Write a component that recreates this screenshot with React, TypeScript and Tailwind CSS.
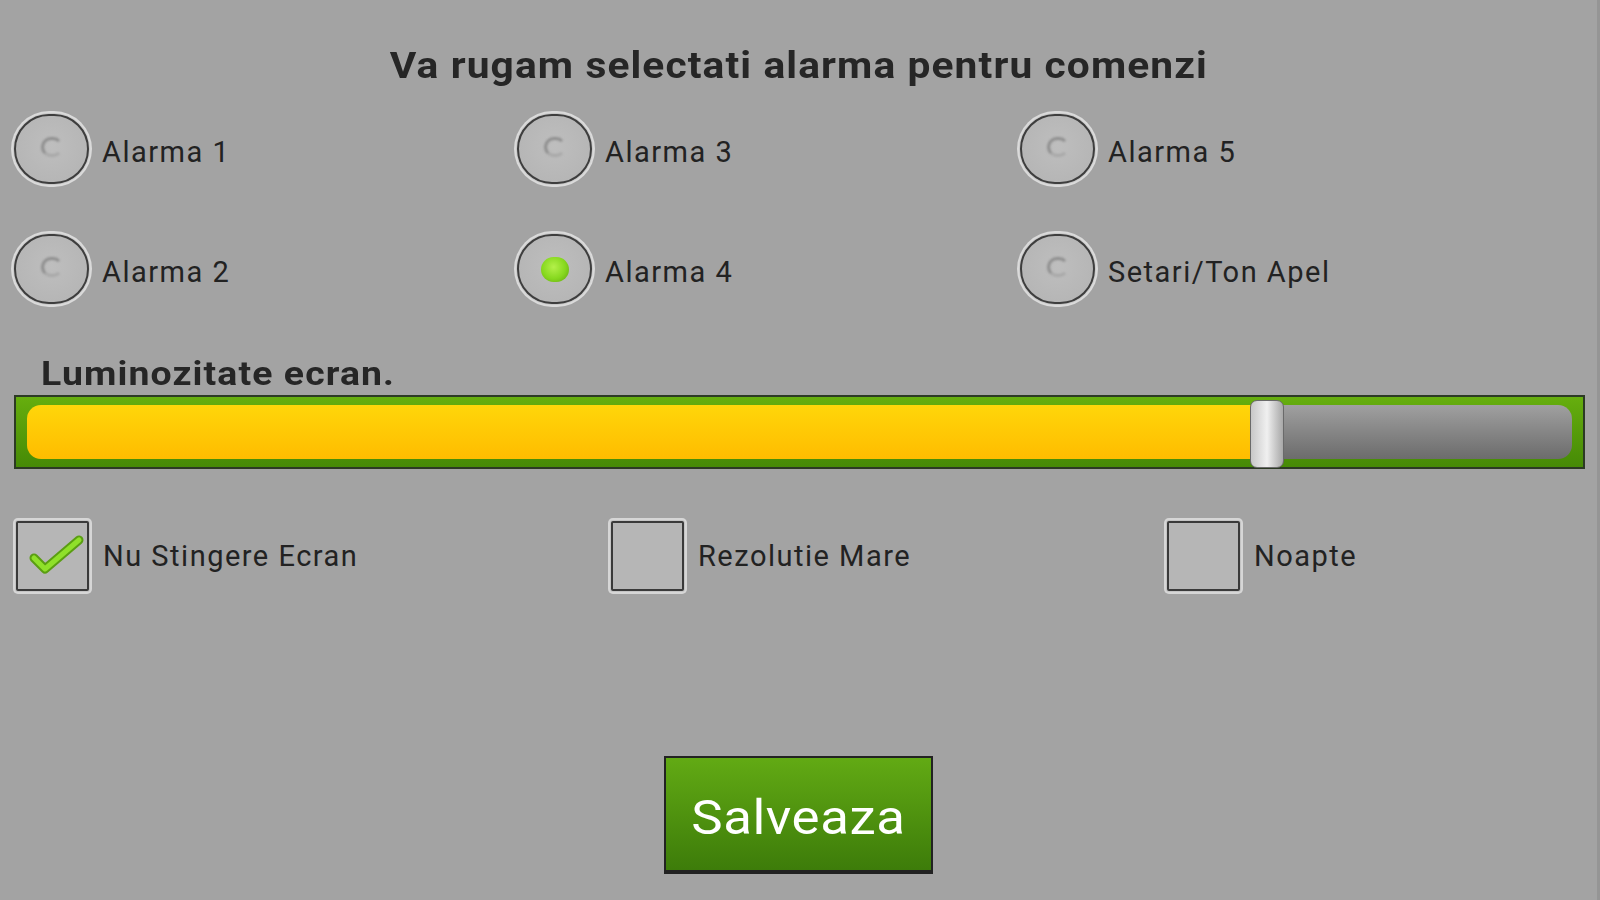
import React from "react";

const font = { fontFamily: "Roboto, 'Liberation Sans', Arial, sans-serif" };

function Radio({ label, checked }: { label: string; checked?: boolean }) {
  return (
    <div className="flex items-center h-[68px]">
      <div className="relative w-[75px] h-[70px] rounded-full border-[2px] border-[#3e3e3e] bg-[radial-gradient(circle_at_50%_45%,#bebebe_0%,#b6b6b6_70%,#aeaeae_100%)] shadow-[0_0_0_1px_#c8c8c8,0_0_0_3px_#dadada] flex items-center justify-center shrink-0">
        {checked ? (
          <div className="w-[28px] h-[25px] rounded-full bg-[radial-gradient(circle_at_45%_40%,#b4f04a_0%,#86d81e_55%,#5e9e10_100%)]" />
        ) : (
          <div className="w-[22px] h-[20px] rounded-full border-[3px] border-[#8e8e8e] border-r-transparent border-b-[#a8a8a8] blur-[1px] -mt-[4px]" />
        )}
      </div>
      <span className="ml-[13px] pt-[7px] text-[29px] leading-none text-[#222] tracking-[1.5px]">{label}</span>
    </div>
  );
}

function Check({ label, checked, className }: { label: string; checked?: boolean; className?: string }) {
  return (
    <div className={"flex items-center " + (className ?? "")}>
      <div className="relative w-[73px] h-[70px] border-[2px] border-[#3a3a3a] bg-[#b6b6b6] shadow-[0_0_0_1px_#c4c4c4,0_0_0_3px_#d6d6d6] rounded-[2px] shrink-0">
        {checked && (
          <svg className="absolute left-0 top-0" width="73" height="69" viewBox="0 0 73 69">
            <polyline points="16,35 27,46 61,17" fill="none" stroke="#5a9e12" strokeWidth="9" strokeLinecap="round" strokeLinejoin="round" />
            <polyline points="16,35 27,46 61,17" fill="none" stroke="#8fe02a" strokeWidth="5" strokeLinecap="round" strokeLinejoin="round" />
          </svg>
        )}
      </div>
      <span className="ml-[14px] text-[29px] leading-none text-[#222] tracking-[1.5px]">{label}</span>
    </div>
  );
}

export default function App() {
  return (
    <div style={font} className="w-[1600px] h-[900px] bg-[#a3a3a3] border-r-[3px] border-[#959595] flex flex-col overflow-hidden">
      <div className="mt-[47px] h-[37px] flex justify-center">
        <span className="inline-block text-[37px] leading-none font-bold text-[#262626] tracking-[1px] scale-x-110">
          Va rugam selectati alarma pentru comenzi
        </span>
      </div>

      <div className="mt-[31px] ml-[14px] grid grid-cols-[503px_503px_1fr] gap-y-[52px]">
        <Radio label="Alarma 1" />
        <Radio label="Alarma 3" />
        <Radio label="Alarma 5" />
        <Radio label="Alarma 2" />
        <Radio label="Alarma 4" checked />
        <Radio label="Setari/Ton Apel" />
      </div>

      <div className="mt-[53px] ml-[41px] h-[34px]">
        <span className="inline-block origin-left scale-x-110 text-[34px] leading-none font-bold text-[#262626] tracking-[1px]">
          Luminozitate ecran.
        </span>
      </div>

      <div className="relative mt-[5px] ml-[14px] w-[1571px] h-[74px] border-[2px] border-[#2c3a24] bg-gradient-to-b from-[#66ae0e] to-[#468a06] flex px-[11px] py-[8px]">
        <div className="w-[1224px] h-full rounded-l-[14px] bg-gradient-to-b from-[#ffd60a] to-[#ffbc00]" />
        <div className="flex-1 h-full rounded-r-[14px] bg-gradient-to-b from-[#a0a0a0] to-[#6c6c6c]" />
        <div className="absolute left-[1234px] top-[3px] w-[34px] h-[68px] rounded-[7px] border border-[#6a6a6a] bg-gradient-to-r from-[#c8c8c8] via-[#f0f0f0] to-[#a8a8a8]" />
      </div>

      <div className="mt-[52px] ml-[16px] flex">
        <Check label="Nu Stingere Ecran" checked className="w-[595px]" />
        <Check label="Rezolutie Mare" className="w-[556px]" />
        <Check label="Noapte" />
      </div>

      <button className="mt-[165px] self-center w-[269px] h-[118px] border-[2px] border-b-[4px] border-[#222] bg-gradient-to-b from-[#62aa14] to-[#3d7c0a] flex items-center justify-center pt-[8px]">
        <span className="inline-block text-white text-[48px] leading-none tracking-[0.5px] scale-x-110">Salveaza</span>
      </button>
    </div>
  );
}
